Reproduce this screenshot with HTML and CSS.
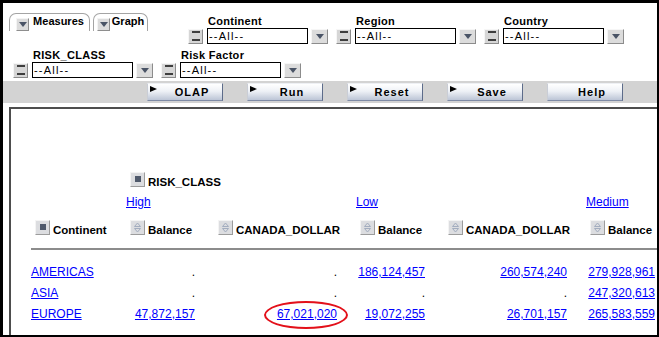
FILE: index.html
```html
<!DOCTYPE html>
<html>

<head>
	<title>OLAP Report</title>
	<link rel="stylesheet" href="styles.css">
</head>

<body>
	<div class="frame">
		<section class="filters">
			<div class="filter-row first">
				<div class="tabs">
					<div class="tab tab-measures"><span class="mini-drop"></span><span class="tab-text">Measures</span></div>
					<div class="tab tab-graph"><span class="mini-drop"></span><span class="tab-text">Graph</span></div>
				</div>
				<div class="filter">
					<p class="filter-label">Continent</p>
					<div class="filter-controls">
						<span class="eq"></span>
						<span class="select">--All--</span>
						<span class="drop"></span>
					</div>
				</div>
				<div class="filter">
					<p class="filter-label">Region</p>
					<div class="filter-controls">
						<span class="eq"></span>
						<span class="select">--All--</span>
						<span class="drop"></span>
					</div>
				</div>
				<div class="filter">
					<p class="filter-label">Country</p>
					<div class="filter-controls">
						<span class="eq"></span>
						<span class="select">--All--</span>
						<span class="drop"></span>
					</div>
				</div>
			</div>
			<div class="filter-row">
				<div class="filter">
					<p class="filter-label">RISK_CLASS</p>
					<div class="filter-controls">
						<span class="eq"></span>
						<span class="select">--All--</span>
						<span class="drop"></span>
					</div>
				</div>
				<div class="filter">
					<p class="filter-label">Risk Factor</p>
					<div class="filter-controls">
						<span class="eq"></span>
						<span class="select">--All--</span>
						<span class="drop"></span>
					</div>
				</div>
			</div>
		</section>

		<nav class="toolbar">
			<button class="tool-btn arrow">OLAP</button>
			<button class="tool-btn arrow">Run</button>
			<button class="tool-btn arrow">Reset</button>
			<button class="tool-btn arrow">Save</button>
			<button class="tool-btn">Help</button>
		</nav>

		<section class="report">
			<div class="grid">
				<!-- column dimension -->
				<div></div>
				<div class="cell span-all"><span class="head"><span class="sq-icon"></span><span>RISK_CLASS</span></span></div>

				<!-- members -->
				<div></div>
				<div class="cell span-2"><a href="#">High</a></div>
				<div class="cell span-2"><a href="#">Low</a></div>
				<div class="cell"><a href="#">Medium</a></div>

				<!-- headers -->
				<div class="cell pad"><span class="head"><span class="sq-icon"></span><span>Continent</span></span></div>
				<div class="cell pad"><span class="head"><span class="sort-icon"><svg width="9" height="11" viewBox="0 0 9 11"><path d="M1.5 4.5 L4.5 1 L7.5 4.5 Z M1.5 6.5 L4.5 10 L7.5 6.5 Z" fill="none" stroke="#a3adbf" stroke-width="1"/></svg></span><span>Balance</span></span></div>
				<div class="cell pad"><span class="head"><span class="sort-icon"><svg width="9" height="11" viewBox="0 0 9 11"><path d="M1.5 4.5 L4.5 1 L7.5 4.5 Z M1.5 6.5 L4.5 10 L7.5 6.5 Z" fill="none" stroke="#a3adbf" stroke-width="1"/></svg></span><span>CANADA_DOLLAR</span></span></div>
				<div class="cell pad"><span class="head"><span class="sort-icon"><svg width="9" height="11" viewBox="0 0 9 11"><path d="M1.5 4.5 L4.5 1 L7.5 4.5 Z M1.5 6.5 L4.5 10 L7.5 6.5 Z" fill="none" stroke="#a3adbf" stroke-width="1"/></svg></span><span>Balance</span></span></div>
				<div class="cell pad"><span class="head"><span class="sort-icon"><svg width="9" height="11" viewBox="0 0 9 11"><path d="M1.5 4.5 L4.5 1 L7.5 4.5 Z M1.5 6.5 L4.5 10 L7.5 6.5 Z" fill="none" stroke="#a3adbf" stroke-width="1"/></svg></span><span>CANADA_DOLLAR</span></span></div>
				<div class="cell pad"><span class="head"><span class="sort-icon"><svg width="9" height="11" viewBox="0 0 9 11"><path d="M1.5 4.5 L4.5 1 L7.5 4.5 Z M1.5 6.5 L4.5 10 L7.5 6.5 Z" fill="none" stroke="#a3adbf" stroke-width="1"/></svg></span><span>Balance</span></span></div>

				<div class="rule"></div>

				<!-- data -->
				<div class="row-head"><a href="#">AMERICAS</a></div>
				<div class="num">.</div>
				<div class="num">.</div>
				<div class="num"><a href="#">186,124,457</a></div>
				<div class="num"><a href="#">260,574,240</a></div>
				<div class="num"><a href="#">279,928,961</a></div>

				<div class="row-head"><a href="#">ASIA</a></div>
				<div class="num">.</div>
				<div class="num">.</div>
				<div class="num">.</div>
				<div class="num">.</div>
				<div class="num"><a href="#">247,320,613</a></div>

				<div class="row-head"><a href="#">EUROPE</a></div>
				<div class="num"><a href="#">47,872,157</a></div>
				<div class="num marked"><a href="#">67,021,020</a><span class="mark"></span></div>
				<div class="num"><a href="#">19,072,255</a></div>
				<div class="num"><a href="#">26,701,157</a></div>
				<div class="num"><a href="#">265,583,559</a></div>
			</div>
		</section>
	</div>
</body>

</html>
```

FILE: styles.css
```css
body,
* {
	margin: 0;
	padding: 0;
	box-sizing: border-box;
}

body {
	font-family: "Liberation Sans", Arial, sans-serif;
	background: #000;
}

.frame {
	height: 100vh;
	width: 100vw;
	border-style: solid;
	border-color: #000;
	border-width: 3px 2px 2px 3px;
	background: #fff;
	display: flex;
	flex-direction: column;
	overflow: hidden;
}

/* filter area */
.filters {
	padding: 10px 0 3px 0;
}

.filter-row {
	display: flex;
	align-items: flex-start;
	padding-left: 10px;
}

.filter-row.first {
	padding-left: 6px;
}

.filter-row + .filter-row {
	margin-top: 4px;
}

.filter-row.first .filter {
	margin-top: 1px;
}

.tabs {
	display: flex;
	gap: 3px;
	width: 179px;
	flex: none;
}

.tab {
	display: flex;
	height: 18px;
	border: 1px solid #a4a4a4;
	border-bottom: none;
	border-radius: 7px 7px 0 0;
	background: #fff;
	font-size: 11px;
	font-weight: bold;
}

.tab-measures {
	width: 81px;
	padding-left: 6px;
}

.tab-graph {
	width: 55px;
	padding-left: 3px;
}

.tab-text {
	flex: 1;
	text-align: center;
	line-height: 13px;
	padding-top: 1px;
	padding-right: 1px;
}

.mini-drop {
	align-self: flex-end;
	width: 13px;
	height: 13px;
	background: #dcdcdc;
	border: 1px solid;
	border-color: #f4f4f4 #8e8e8e #8e8e8e #f4f4f4;
	display: flex;
	align-items: center;
	justify-content: center;
}

.mini-drop::before,
.drop::before {
	content: "";
	border-left: 4px solid transparent;
	border-right: 4px solid transparent;
	border-top: 5px solid #4a5466;
}

.filter {
	margin-right: 8px;
}

.filter-label {
	font-size: 11px;
	font-weight: bold;
	letter-spacing: 0.3px;
	line-height: 13px;
	padding-left: 20px;
	padding-top: 1px;
}

.filter-controls {
	display: flex;
	align-items: center;
	height: 16px;
}

.eq {
	width: 15px;
	height: 15px;
	margin-right: 4px;
	background: #d6d6d6;
	border: 1px solid;
	border-color: #f6f6f6 #8c8c8c #8c8c8c #f6f6f6;
	display: flex;
	align-items: center;
	justify-content: center;
}

.eq::before {
	content: "";
	width: 8px;
	height: 6px;
	border-top: 2px solid #3e3e3e;
	border-bottom: 2px solid #3e3e3e;
}

.select {
	width: 101px;
	height: 16px;
	border: 1px solid #000;
	background: #fff;
	font-size: 11px;
	letter-spacing: 1.2px;
	line-height: 14px;
	padding-left: 1px;
}

.drop {
	width: 17px;
	height: 15px;
	margin-left: 3px;
	background: #dcdcdc;
	border: 1px solid;
	border-color: #f6f6f6 #8c8c8c #8c8c8c #f6f6f6;
	display: flex;
	align-items: center;
	justify-content: center;
}

/* button bar */
.toolbar {
	height: 22px;
	flex: none;
	background: #d3d3d3;
	display: flex;
	align-items: center;
	gap: 24px;
	padding-left: 144px;
}

.tool-btn {
	position: relative;
	width: 76px;
	height: 18px;
	border: 1px solid;
	border-color: #eef0f4 #5d6c8a #7f8ba6 #c9cdd6;
	background: linear-gradient(#ffffff, #eef1f6 45%, #bcc5d6);
	font-family: "Liberation Sans", Arial, sans-serif;
	font-size: 11px;
	font-weight: bold;
	letter-spacing: 1px;
	padding-left: 14px;
	color: #000;
}

.tool-btn.arrow::before {
	content: "";
	position: absolute;
	left: 2px;
	top: 2px;
	border-left: 7px solid #000;
	border-top: 3px solid transparent;
	border-bottom: 3px solid transparent;
}

/* report panel */
.report {
	flex: 1;
	margin: 4px 0 0 6px;
	border-top: 2px solid #4d4d4d;
	border-left: 2px solid #4d4d4d;
	padding: 59px 0 0 20px;
	overflow: hidden;
}

.grid {
	display: grid;
	grid-template-columns: 95px 88px 142px 88px 142px 88px;
	grid-template-rows: 22px 24px 26px 22px repeat(3, 21px);
	font-size: 12px;
}

.grid a {
	color: #0000ff;
	text-decoration: underline;
}

.cell {
	display: flex;
	align-items: center;
}

.span-all {
	grid-column: 2 / -1;
	padding-left: 4px;
}

.span-2 {
	grid-column: span 2;
}

.pad {
	padding-left: 4px;
}

.head {
	display: flex;
	align-items: flex-end;
	gap: 3px;
	font-size: 11.5px;
	font-weight: bold;
	line-height: 12px;
}

.head > span:last-child {
	margin-bottom: -1px;
}

.sq-icon,
.sort-icon {
	flex: none;
	width: 15px;
	height: 15px;
	background: #dcdde0;
	border: 1px solid;
	border-color: #f4f4f4 #9c9c9c #9c9c9c #f4f4f4;
	display: flex;
	align-items: center;
	justify-content: center;
}

.sq-icon::before {
	content: "";
	width: 6px;
	height: 6px;
	background: #4f596b;
}

.sort-icon svg {
	display: block;
}

.rule {
	grid-column: 1 / -1;
	height: 2px;
	margin-top: 8px;
	background: #8c8c8c;
}

.row-head {
	line-height: 21px;
}

.num {
	line-height: 21px;
	text-align: right;
	padding-right: 19px;
}

.marked {
	position: relative;
}

.mark {
	position: absolute;
	left: 50px;
	top: -3px;
	width: 84px;
	height: 28px;
	border: 2px solid #e3101a;
	border-radius: 50%;
}
```
